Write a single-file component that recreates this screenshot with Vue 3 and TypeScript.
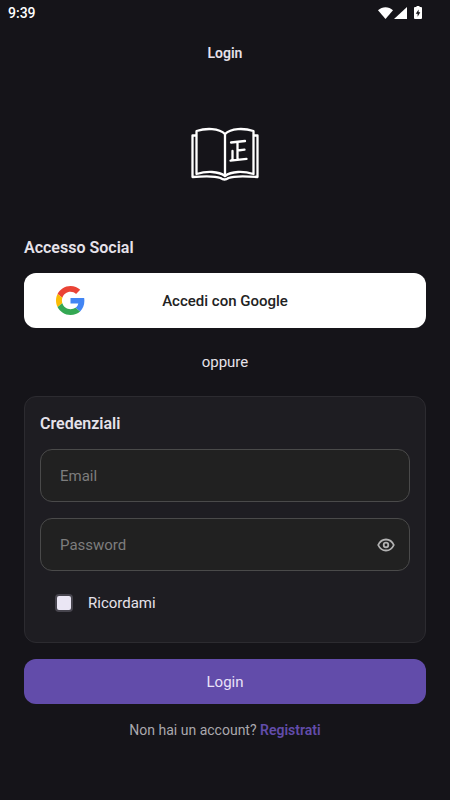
<script setup lang="ts">
import { ref } from 'vue'

const email = ref('')
const password = ref('')
const remember = ref(false)
const showPassword = ref(false)
</script>

<template>
  <div class="screen">
    <div class="status-bar">
      <span class="clock">9:39</span>
      <div class="status-icons" aria-hidden="true">
        <svg width="15" height="12" viewBox="0 0 15 12"><path d="M0 3.2C4.4-.9 10.6-.9 15 3.2L7.5 12z" fill="#fff" /></svg>
        <svg width="13" height="12" viewBox="0 0 13 12"><path d="M13 0v12H0z" fill="#fff" /></svg>
        <svg class="battery" width="8" height="13" viewBox="0 0 8 13">
          <path d="M2.5 0h3v1H7q1 0 1 1v10q0 1-1 1H1q-1 0-1-1V2q0-1 1-1h1.500z" fill="#fff" />
          <path d="M4.600 3.500 1.800 7.800h1.800v3l2.700-4.500H4.600z" fill="#151419" />
        </svg>
      </div>
    </div>

    <header class="app-bar"><h1>Login</h1></header>

    <main class="content">
      <svg class="logo" width="68" height="54" viewBox="0 0 68 54" role="img" aria-label="Logo">
        <g fill="none" stroke="#fff" stroke-width="2.300" stroke-linecap="round" stroke-linejoin="round">
          <path d="M34 7C28 1 15 1 5.500 4v43c10-3 22-3 28.500 2 6.500-5 18.500-5 28.500-2V4C53 1 40 1 34 7z" />
          <path d="M34 7v42" />
          <path d="M5 8.500H1.500v41.500c12-1 23-1 28 1q4 3 8 0c5-2 16-2 29-1V8.500H63" />
          <path d="M40 15.500l14-1.500M46.500 15v17.500M46.500 23.500l7-.8M41.500 24v9M39.500 33.700l16-1.800" />
        </g>
      </svg>

      <section class="social">
        <h2>Accesso Social</h2>
        <button type="button" class="google">
          <svg width="29" height="29" viewBox="0 0 48 48" aria-hidden="true">
            <path fill="#EA4335" d="M24 9.500c3.540 0 6.710 1.220 9.210 3.600l6.850-6.850C35.900 2.380 30.470 0 24 0 14.620 0 6.510 5.380 2.560 13.220l7.980 6.190C12.430 13.720 17.740 9.500 24 9.500z" />
            <path fill="#4285F4" d="M46.980 24.550c0-1.570-.15-3.090-.38-4.550H24v9.020h12.940c-.58 2.960-2.260 5.480-4.780 7.180l7.730 6c4.510-4.180 7.090-10.360 7.090-17.650z" />
            <path fill="#FBBC05" d="M10.530 28.590c-.48-1.450-.76-2.990-.76-4.590s.27-3.140.76-4.590l-7.980-6.190C.92 16.460 0 20.120 0 24c0 3.880.92 7.540 2.560 10.780l7.970-6.190z" />
            <path fill="#34A853" d="M24 48c6.480 0 11.930-2.130 15.890-5.810l-7.730-6c-2.150 1.450-4.920 2.300-8.160 2.300-6.260 0-11.570-4.220-13.470-9.910l-7.980 6.190C6.510 42.620 14.620 48 24 48z" />
          </svg>
          <span>Accedi con Google</span>
        </button>
      </section>

      <p class="divider">oppure</p>

      <form id="login-form" class="card" @submit.prevent>
        <h2>Credenziali</h2>
        <div class="fields">
          <div class="field">
            <input v-model="email" type="email" placeholder="Email" aria-label="Email" />
          </div>
          <div class="field">
            <input v-model="password" :type="showPassword ? 'text' : 'password'" placeholder="Password" aria-label="Password" />
            <button type="button" class="eye" aria-label="Mostra password" @click="showPassword = !showPassword">
              <svg width="18" height="14" viewBox="0 0 18 14" fill="none" stroke="#b2b2b2" stroke-width="1.800">
                <path d="M1.200 7C2.800 3.500 5.600 1.500 9 1.500S15.200 3.500 16.800 7C15.200 10.500 12.400 12.500 9 12.500S2.800 10.500 1.200 7z" />
                <circle cx="9" cy="7" r="2.300" />
              </svg>
            </button>
          </div>
          <label class="remember">
            <input v-model="remember" type="checkbox" />
            <span>Ricordami</span>
          </label>
        </div>
      </form>

      <button type="submit" form="login-form" class="submit">Login</button>
      <p class="signup">Non hai un account? <a href="#">Registrati</a></p>
    </main>
  </div>
</template>

<style>
body {
  margin: 0;
  background: #151419;
}
</style>

<style scoped>
.screen {
  min-height: 100vh;
  box-sizing: border-box;
  background: #151419;
  color: #e6e2ea;
  font-family: Roboto, "Liberation Sans", sans-serif;
  font-size: 15px;
  line-height: 20px;
}

h1, h2, p {
  margin: 0;
}

h2 {
  font-size: 16px;
  line-height: 22px;
  font-weight: 600;
}

button, input {
  font: inherit;
}

.status-bar {
  display: flex;
  align-items: center;
  justify-content: space-between;
  height: 25px;
  padding: 0 28px 0 8px;
}

.clock {
  color: #fff;
  font-size: 14px;
  font-weight: 500;
}

.status-icons {
  display: flex;
  align-items: center;
  gap: 1px;
}

.battery {
  margin-left: 6px;
}

.app-bar {
  display: flex;
  align-items: center;
  justify-content: center;
  height: 55px;
}

h1 {
  font-size: 14px;
  line-height: 20px;
  font-weight: 600;
}

.content {
  display: flex;
  flex-direction: column;
  padding: 47px 24px 24px;
}

.logo {
  align-self: center;
}

.social {
  display: flex;
  flex-direction: column;
  gap: 14px;
  margin-top: 56px;
}

.google {
  display: grid;
  grid-template-columns: 30px 1fr 30px;
  align-items: center;
  height: 55px;
  padding: 0 32px;
  border: 0;
  border-radius: 12px;
  background: #fff;
  color: #222;
  font-weight: 500;
}

.divider {
  margin: 24px 0;
  text-align: center;
}

.card {
  display: flex;
  flex-direction: column;
  gap: 14px;
  padding: 16px 15px;
  border: 1px solid #2c2b30;
  border-radius: 12px;
  background: #1e1d22;
}

.fields {
  display: flex;
  flex-direction: column;
  gap: 16px;
}

.field {
  display: flex;
  align-items: center;
  box-sizing: border-box;
  height: 53px;
  padding: 0 14px 0 19px;
  border: 1px solid #4a4a4a;
  border-radius: 12px;
  background: #212121;
}

.field input {
  flex: 1;
  min-width: 0;
  padding: 0;
  border: 0;
  outline: 0;
  background: transparent;
  color: #e6e2ea;
}

.field input::placeholder {
  color: #7d7d7d;
  opacity: 1;
}

.eye {
  display: flex;
  padding: 0;
  border: 0;
  background: transparent;
}

.remember {
  display: flex;
  align-items: center;
  gap: 15px;
  height: 32px;
  padding: 0 15px 7px;
}

.remember input {
  appearance: none;
  box-sizing: border-box;
  width: 18px;
  height: 18px;
  margin: 0;
  border: 2px solid #47454e;
  border-radius: 4px;
  background: #eae6f4;
}

.remember input:checked {
  background: #624caa;
}

.submit {
  height: 45px;
  margin-top: 16px;
  padding: 0;
  border: 0;
  border-radius: 12px;
  background: #624caa;
  color: #e9e2f8;
}

.signup {
  margin-top: 16px;
  color: #aaa8ad;
  font-size: 14px;
  text-align: center;
}

.signup a {
  color: #624caa;
  font-weight: 600;
  text-decoration: none;
}
</style>
